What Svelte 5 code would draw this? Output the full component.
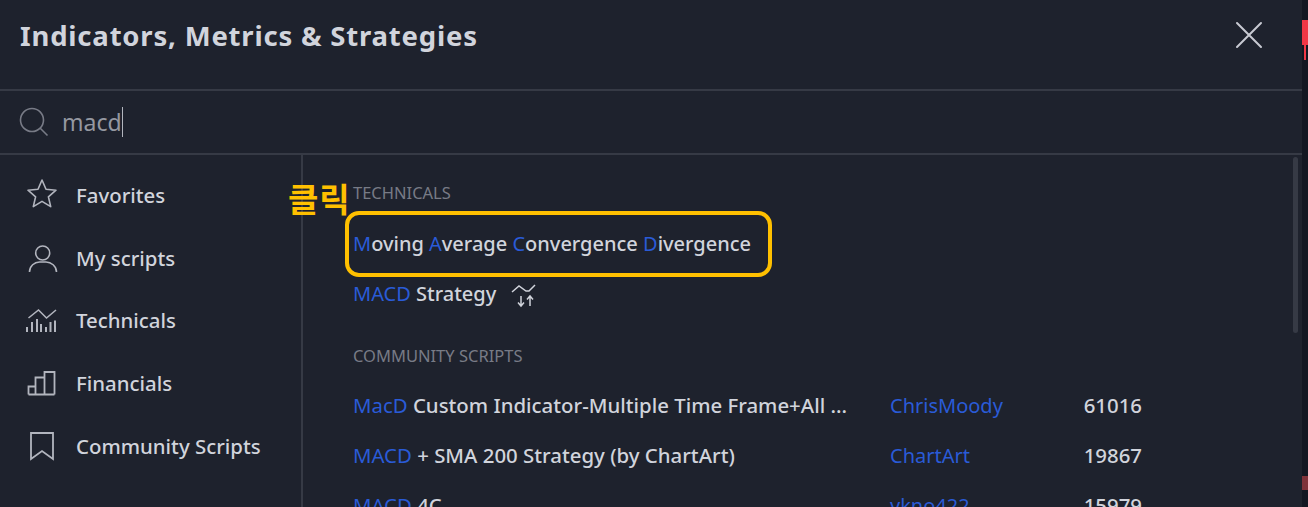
<script>
  const categories = [
    { label: 'Favorites', icon: 'star' },
    { label: 'My scripts', icon: 'user' },
    { label: 'Technicals', icon: 'tech' },
    { label: 'Financials', icon: 'bars' },
    { label: 'Community Scripts', icon: 'mark' }
  ];

  const community = [
    { hit: 'MacD', rest: ' Custom Indicator-Multiple Time Frame+All ...', author: 'ChrisMoody', count: 61016 },
    { hit: 'MACD', rest: ' + SMA 200 Strategy (by ChartArt)', author: 'ChartArt', count: 19867 },
    { hit: 'MACD', rest: ' 4C', author: 'vkno422', count: 15979 }
  ];
</script>

<div class="page">
  <div class="dialog">
    <header class="head">
      <h1>Indicators, Metrics &amp; Strategies</h1>
      <svg class="close" width="28" height="28" viewBox="0 0 28 28" fill="none" stroke="#c8cad2" stroke-width="2" stroke-linecap="round">
        <path d="M2 2l24 24M26 2L2 26" />
      </svg>
    </header>

    <div class="search">
      <svg width="30" height="30" viewBox="0 0 30 30" fill="none" stroke="#787b86" stroke-width="1.6">
        <circle cx="13" cy="13" r="11.500" />
        <path d="M21 21l7.500 7.500" />
      </svg>
      <span class="query">macd</span><span class="caret"></span>
    </div>

    <div class="body">
      <nav class="side">
        {#each categories as cat}
          <div class="cat">
            <svg width="32" height="32" viewBox="0 0 32 32" fill="none" stroke="#b2b5be" stroke-width="1.6">
              {#if cat.icon === 'star'}
                <path d="M16 1l4 9.300 10 .9-7.600 6.600 2.300 9.800L16 22.400l-8.700 5.200 2.300-9.800L2 11.200l10-.9z" stroke-linejoin="round" />
              {:else if cat.icon === 'user'}
                <circle cx="16.700" cy="11" r="7" />
                <path d="M3.500 30c0-6 5-10 10-10h6.500c5 0 10.500 4 10.500 10" />
              {:else if cat.icon === 'tech'}
                <path d="M2.500 14l10-8 8 8 9.500-8" />
                <path d="M1 28v-5M6 28v-10M11 28V15M15 28v-8M20 28v-5M24.500 28v-10M29 28V16.500" stroke-width="2" />
              {:else if cat.icon === 'bars'}
                <path d="M2.500 27.500h26M2.500 27.500v-8h7v8M9.500 27.500v-17h9v17M18.500 27.500V5h10v22.500" stroke-width="1.800" />
              {:else}
                <path d="M5 3h22v26l-11-8-11 8z" stroke-width="1.800" />
              {/if}
            </svg>
            <span>{cat.label}</span>
          </div>
        {/each}
      </nav>

      <main class="list">
        <h2>TECHNICALS</h2>
        <div class="row top"><b>M</b>oving <b>A</b>verage <b>C</b>onvergence <b>D</b>ivergence</div>
        <div class="row top">
          <b>MACD</b>&nbsp;Strategy
          <svg class="strat" width="26" height="24" viewBox="0 0 26 24" fill="none" stroke="#d1d4dc" stroke-width="1.500">
            <path d="M1 8l7-6 7 5 3 0 6-6" />
            <path d="M10 12v10M7 18.500l3 3.500 3-3.500M19 22V12M16 15.500l3-3.500 3 3.500" />
          </svg>
        </div>

        <h2 class="second">COMMUNITY SCRIPTS</h2>
        {#each community as item}
          <div class="row script">
            <div class="name"><b>{item.hit}</b>{item.rest}</div>
            <div class="author">{item.author}</div>
            <div class="count">{item.count}</div>
          </div>
        {/each}

        <div class="thumb"></div>
      </main>
    </div>

    <!-- annotations pasted over the screenshot -->
    <div class="note">클릭</div>
    <div class="outline"></div>
  </div>

  <div class="chart">
    <div class="candle"></div>
    <div class="wick"></div>
    <div class="dim"></div>
  </div>
</div>

<style>
  :global(body) {
    margin: 0;
    background: #131722;
    overflow: hidden;
  }

  .page {
    display: flex;
    height: 507px;
    overflow: hidden;
    font-family: "Noto Sans", "Noto Sans CJK KR", sans-serif;
    color: #d1d4dc;
  }

  .dialog {
    position: relative;
    width: 1302px;
    flex: none;
    display: flex;
    flex-direction: column;
    background: #1e222d;
    overflow: hidden;
  }

  .head {
    height: 91px;
    flex: none;
    box-sizing: border-box;
    display: flex;
    align-items: center;
    justify-content: space-between;
    padding: 0 39px 19px 20px;
    border-bottom: 2px solid #363a45;
  }

  h1 {
    margin: 0;
    font-size: 27.500px;
    font-weight: 700;
    letter-spacing: 0.8px;
    color: #d1d4dc;
  }

  .search {
    height: 64px;
    flex: none;
    box-sizing: border-box;
    display: flex;
    align-items: center;
    padding: 0 0 0 19px;
    border-bottom: 2px solid #363a45;
  }

  .query {
    margin-left: 13px;
    font-size: 23px;
    color: #9598a1;
  }

  .caret {
    width: 1.500px;
    height: 30px;
    background: #b2b5be;
  }

  .body {
    flex: 1;
    display: flex;
    min-height: 0;
  }

  .side {
    width: 303px;
    flex: none;
    box-sizing: border-box;
    padding: 9px 0 0 26px;
    border-right: 2px solid #363a45;
    display: flex;
    flex-direction: column;
  }

  .cat {
    height: 62.600px;
    flex: none;
    display: flex;
    align-items: center;
    gap: 18px;
    font-size: 20.400px;
    font-weight: 500;
    color: #d1d4dc;
  }

  .list {
    position: relative;
    flex: 1;
    padding-left: 50px;
    min-width: 0;
  }

  h2 {
    margin: 0;
    height: 52px;
    box-sizing: content-box;
    display: flex;
    align-items: center;
    font-size: 16.500px;
    font-weight: 400;
    color: #787b86;
    padding-top: 11px;
  }

  h2.second {
    padding-top: 12px;
    height: 50px;
  }

  .row {
    height: 50px;
    display: flex;
    align-items: center;
    font-size: 20.400px;
    font-weight: 500;
    white-space: pre;
    color: #d1d4dc;
  }

  .row.top {
    font-size: 20px;
  }

  b {
    font-weight: 400;
    color: #2a5bd7;
  }

  .strat {
    margin: 5px 0 0 10px;
  }

  .script {
    display: grid;
    grid-template-columns: 537px 172px 80px;
  }

  .author {
    color: #2a5bd7;
    font-size: 20px;
    font-weight: 400;
  }

  .count {
    text-align: right;
    font-weight: 500;
  }

  .thumb {
    position: absolute;
    right: 4px;
    top: 2px;
    width: 5px;
    height: 176px;
    border-radius: 3px;
    background: #363a45;
  }

  .note {
    position: absolute;
    left: 288px;
    top: 178px;
    font-size: 33px;
    font-weight: 700;
    letter-spacing: 1px;
    line-height: 44px;
    color: #ffc000;
  }

  .outline {
    position: absolute;
    left: 345px;
    top: 211px;
    width: 427px;
    height: 66px;
    box-sizing: border-box;
    border: 4px solid #ffc000;
    border-radius: 14px;
  }

  .chart {
    position: relative;
    flex: 1;
    background: #131722;
  }

  .candle {
    position: absolute;
    left: 0;
    right: 0;
    top: 20px;
    height: 25px;
    background: #f23645;
  }

  .wick {
    position: absolute;
    left: 2px;
    top: 45px;
    width: 2px;
    height: 15px;
    background: #f23645;
  }

  .dim {
    position: absolute;
    left: 0;
    right: 0;
    top: 476px;
    height: 14px;
    background: #7f323a;
  }
</style>
